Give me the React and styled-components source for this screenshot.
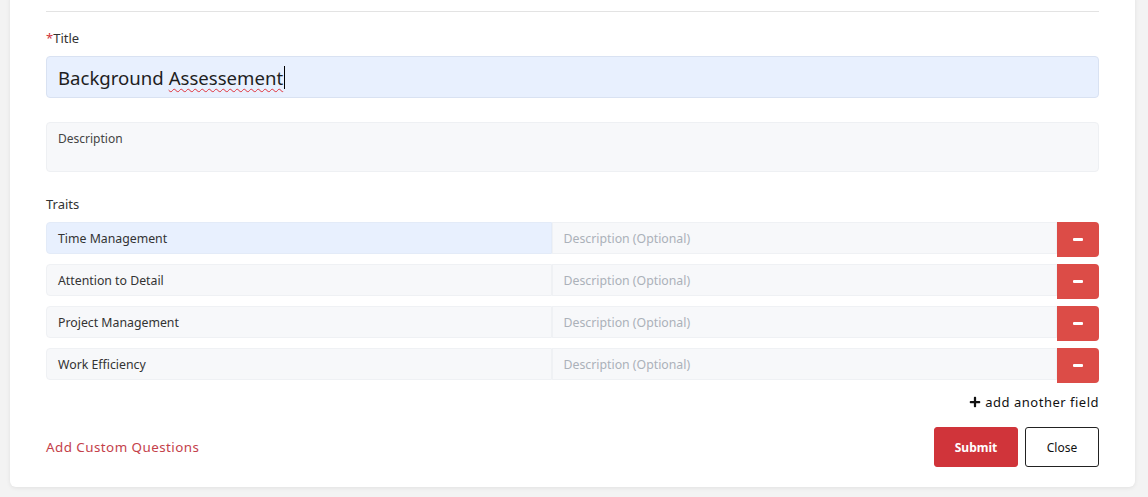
import React from "react";
import styled, { createGlobalStyle } from "styled-components";
import { FaPlus } from "react-icons/fa";

const GlobalStyle = createGlobalStyle`
  html, body {
    margin: 0;
    padding: 0;
    background: #f3f3f3;
    font-family: "Noto Sans", "Open Sans", "Liberation Sans", sans-serif;
  }
`;

const Page = styled.div`
  padding: 0 13px 9px 10px;
`;

const Card = styled.div`
  margin-top: -8px;
  background: #ffffff;
  border-radius: 6px;
  box-shadow: 0 1px 4px rgba(0, 0, 0, 0.08);
  padding: 19px 36px 20px 36px;
`;

const Divider = styled.div`
  height: 1px;
  background: #e3e3e3;
  margin-bottom: 16px;
`;

const Label = styled.div`
  font-size: 13px;
  line-height: 20px;
  color: #333;
  margin-bottom: 8px;
`;

const Star = styled.span`
  color: #d0343a;
`;

const TitleBox = styled.div`
  height: 42px;
  box-sizing: border-box;
  display: flex;
  align-items: center;
  padding: 0 11px;
  background: #e8f0fe;
  border: 1px solid #d9e2f2;
  border-radius: 4px;
  font-size: 18.6px;
  color: #1e1e1e;
`;

const Misspelled = styled.span`
  text-decoration: underline wavy #e0323a;
  text-decoration-thickness: 1px;
  text-underline-offset: 3px;
`;

const Caret = styled.span`
  display: inline-block;
  width: 1px;
  height: 23px;
  background: #000;
  margin-left: 1px;
`;

const DescBox = styled.div`
  margin-top: 24px;
  height: 50px;
  box-sizing: border-box;
  padding: 7px 11px;
  background: #f7f8fa;
  border: 1px solid #eef0f3;
  border-radius: 4px;
  font-size: 12px;
  line-height: 18px;
  color: #444;
`;

const TraitsLabel = styled(Label)`
  margin-top: 22px;
`;

const TraitList = styled.div`
  display: flex;
  flex-direction: column;
  gap: 7px;
`;

const TraitRow = styled.div`
  display: flex;
  align-items: flex-start;
  height: 35px;
`;

const Cell = styled.div`
  flex: 1;
  height: 32px;
  box-sizing: border-box;
  display: flex;
  align-items: center;
  padding: 0 11px;
  font-size: 12.3px;
  background: ${(p) => (p.$active ? "#e8f0fe" : "#f7f8fa")};
  border: 1px solid ${(p) => (p.$active ? "#e3ebf8" : "#eff1f4")};
  border-radius: ${(p) => (p.$first ? "4px 0 0 4px" : "0")};
  color: ${(p) => (p.$placeholder ? "#abb1b9" : "#333")};
`;

const RemoveButton = styled.button`
  width: 42px;
  height: 35px;
  border: none;
  background: #dc4c47;
  border-radius: 0 4px 4px 0;
  display: flex;
  align-items: center;
  justify-content: center;
  padding: 0;
  cursor: pointer;
`;

const Minus = styled.span`
  width: 10px;
  height: 3px;
  border-radius: 1px;
  background: #fff;
`;

const AddRow = styled.div`
  display: flex;
  justify-content: flex-end;
  margin-top: 9px;
`;

const AddLink = styled.div`
  display: flex;
  align-items: center;
  gap: 4px;
  font-size: 13px;
  line-height: 20px;
  color: #111;
  letter-spacing: 0.5px;
`;

const Footer = styled.div`
  display: flex;
  align-items: center;
  justify-content: space-between;
  margin-top: 15px;
`;

const CustomLink = styled.a`
  color: #c4414a;
  font-size: 13.4px;
  letter-spacing: 0.45px;
  cursor: pointer;
`;

const Actions = styled.div`
  display: flex;
  gap: 7px;
`;

const Button = styled.button`
  height: 40px;
  box-sizing: border-box;
  border-radius: 3px;
  font-family: inherit;
  font-size: 12px;
  padding: 0;
  cursor: pointer;
  width: ${(p) => (p.$primary ? "84px" : "74px")};
  font-weight: ${(p) => (p.$primary ? 700 : 400)};
  background: ${(p) => (p.$primary ? "#d0343a" : "#fff")};
  color: ${(p) => (p.$primary ? "#fff" : "#111")};
  border: 1px solid ${(p) => (p.$primary ? "#d0343a" : "#222")};
`;

const traits = [
  "Time Management",
  "Attention to Detail",
  "Project Management",
  "Work Efficiency",
];

export default function App() {
  return (
    <>
      <GlobalStyle />
      <Page>
        <Card>
          <Divider />
          <Label>
            <Star>*</Star>Title
          </Label>
          <TitleBox>
            Background&nbsp;<Misspelled>Assessement</Misspelled>
            <Caret />
          </TitleBox>
          <DescBox>Description</DescBox>
          <TraitsLabel>Traits</TraitsLabel>
          <TraitList>
            {traits.map((t, i) => (
              <TraitRow key={t}>
                <Cell $first $active={i === 0}>
                  {t}
                </Cell>
                <Cell $placeholder>Description (Optional)</Cell>
                <RemoveButton>
                  <Minus />
                </RemoveButton>
              </TraitRow>
            ))}
          </TraitList>
          <AddRow>
            <AddLink>
              <FaPlus size={12} />
              add another field
            </AddLink>
          </AddRow>
          <Footer>
            <CustomLink>Add Custom Questions</CustomLink>
            <Actions>
              <Button $primary>Submit</Button>
              <Button>Close</Button>
            </Actions>
          </Footer>
        </Card>
      </Page>
    </>
  );
}
